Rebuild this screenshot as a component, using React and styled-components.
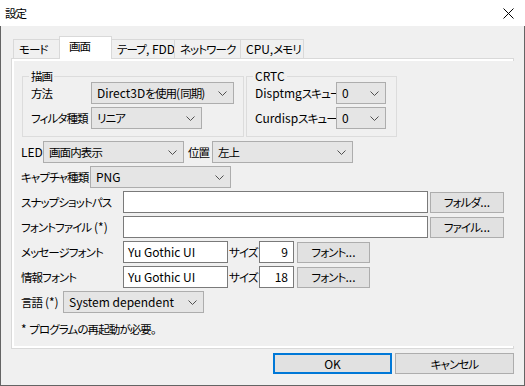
import React from "react";
import styled, { createGlobalStyle } from "styled-components";

const GlobalStyle = createGlobalStyle`
  html, body {
    margin: 0;
    padding: 0;
    background: #f0f0f0;
  }
  body {
    font-family: "Noto Sans CJK JP", sans-serif;
    font-size: 12px;
    line-height: 16px;
    font-feature-settings: "palt";
    color: #000;
  }
  * { box-sizing: border-box; }
`;

// Yu Gothic UI has narrow kana; squeeze the CJK runs to match
const Jp = styled.span`
  font-size: 11.5px;
  letter-spacing: -0.9px;
`;

const jp = (text) =>
  text
    .split(/([\u3000-\u30ff\u4e00-\u9fff\uff00-\uffef]+)/)
    .map((s, i) => (i % 2 ? <Jp key={i}>{s}</Jp> : s));

const Window = styled.div`
  width: 525px;
  height: 386px;
  display: flex;
  flex-direction: column;
  background: #f0f0f0;
`;

const TitleBar = styled.div`
  height: 26px;
  flex: none;
  background: #fff;
  display: flex;
  align-items: center;
  justify-content: space-between;
  padding: 0 11px 0 5px;
`;

const Body = styled.div`
  flex: 1;
  display: flex;
  flex-direction: column;
  border: 1px solid #646464;
  border-top: none;
  padding: 10px 10px 11px 10px;
`;

const TabStrip = styled.div`
  height: 22px;
  flex: none;
  display: flex;
  align-items: flex-end;
  padding-left: 2px;
`;

const Tab = styled.div`
  width: ${(p) => p.$w}px;
  height: ${(p) => (p.$active ? 23 : 19)}px;
  margin-left: -1px;
  margin-bottom: ${(p) => (p.$active ? -1 : 0)}px;
  padding: 0 0 ${(p) => (p.$active ? 4 : 1)}px ${(p) => (p.$active ? 9 : 5)}px;
  position: relative;
  z-index: ${(p) => (p.$active ? 1 : 0)};
  display: flex;
  align-items: center;
  white-space: nowrap;
  overflow: hidden;
  border: 1px solid #d9d9d9;
  border-bottom: none;
  background: ${(p) => (p.$active ? "#fff" : "#f0f0f0")};
  &:first-child { margin-left: 0; }
`;

const Panel = styled.div`
  flex: 1;
  display: flex;
  border: 1px solid #d9d9d9;
  background: #fff;
  padding: 2px;
`;

const Page = styled.div`
  flex: 1;
  background: #f0f0f0;
  display: flex;
  flex-direction: column;
  gap: 3px;
  padding: 9px 10px 0 7px;
`;

const GroupRow = styled.div`
  display: flex;
  gap: 2px;
  margin-left: 1px;
  margin-bottom: 1px;
`;

const Group = styled.fieldset`
  width: ${(p) => p.$w}px;
  margin: 0;
  min-width: 0;
  padding: 0 0 7px 8px;
  border: 1px solid #dcdcdc;
  display: flex;
  flex-direction: column;
  gap: 3px;
`;

const Legend = styled.legend`
  padding: 0 2px;
  margin-left: -2px;
  line-height: 12px;
`;

const Row = styled.div`
  display: flex;
  align-items: center;
  height: 22px;
`;

const Note = styled.div`
  margin-top: 5px;
  height: 16px;
`;

const LabelBox = styled.div`
  width: ${(p) => p.$w}px;
  flex: none;
  padding-left: ${(p) => p.$pl || 0}px;
  white-space: nowrap;
`;

const SelectBox = styled.div`
  width: ${(p) => p.$w}px;
  height: 22px;
  flex: none;
  display: flex;
  align-items: center;
  justify-content: space-between;
  padding: 0 6px 0 5px;
  background: #e5e5e5;
  border: 1px solid #adadad;
  white-space: nowrap;
`;

const TextField = styled.div`
  width: ${(p) => p.$w}px;
  height: 22px;
  flex: none;
  display: flex;
  align-items: center;
  justify-content: ${(p) => (p.$right ? "flex-end" : "flex-start")};
  padding: 0 ${(p) => (p.$right ? 5 : 4)}px;
  background: #fff;
  border: 1px solid #7a7a7a;
`;

const ButtonBox = styled.div`
  width: ${(p) => p.$w}px;
  height: 21px;
  margin-left: ${(p) => p.$ml || 0}px;
  flex: none;
  display: flex;
  align-items: center;
  justify-content: center;
  background: #e1e1e1;
  border: ${(p) => (p.$default ? "2px solid #0078d7" : "1px solid #adadad")};
`;

const ButtonBar = styled.div`
  flex: none;
  display: flex;
  justify-content: flex-end;
  gap: 3px;
  margin-top: 4px;
`;

const Chevron = () => (
  <svg width="9" height="5" viewBox="0 0 9 5">
    <path d="M0.5 0.5 L4.5 4.5 L8.5 0.5" fill="none" stroke="#505050" strokeWidth="1" />
  </svg>
);

const Select = ({ w, children }) => (
  <SelectBox $w={w}>
    <span>{jp(children)}</span>
    <Chevron />
  </SelectBox>
);

const Label = ({ w, pl, children }) => (
  <LabelBox $w={w} $pl={pl}>
    {jp(children)}
  </LabelBox>
);

const Button = ({ w, ml, isDefault, children }) => (
  <ButtonBox $w={w} $ml={ml} $default={isDefault}>
    {jp(children)}
  </ButtonBox>
);

const CloseIcon = () => (
  <svg width="11" height="11" viewBox="0 0 11 11">
    <path d="M0.5 0.5 L10.5 10.5 M10.5 0.5 L0.5 10.5" stroke="#000" strokeWidth="1" />
  </svg>
);

const tabs = [
  { label: "モード", w: 47 },
  { label: "画面", w: 53, active: true },
  { label: "テープ, FDD", w: 64 },
  { label: "ネットワーク", w: 67 },
  { label: "CPU, メモリ", w: 64 },
];

export default function App() {
  return (
    <>
      <GlobalStyle />
      <Window>
        <TitleBar>
          <span>{jp("設定")}</span>
          <CloseIcon />
        </TitleBar>
        <Body>
          <TabStrip>
            {tabs.map((t) => (
              <Tab key={t.label} $w={t.w} $active={t.active}>
                {jp(t.label)}
              </Tab>
            ))}
          </TabStrip>
          <Panel>
            <Page>
              <GroupRow>
                <Group $w={222}>
                  <Legend>{jp("描画")}</Legend>
                  <Row>
                    <Label w={60}>方法</Label>
                    <Select w={143}>Direct3Dを使用(同期)</Select>
                  </Row>
                  <Row>
                    <Label w={60}>フィルタ種類</Label>
                    <Select w={111}>リニア</Select>
                  </Row>
                </Group>
                <Group $w={151}>
                  <Legend>CRTC</Legend>
                  <Row>
                    <Label w={81}>Disptmgスキュー</Label>
                    <Select w={50}>0</Select>
                  </Row>
                  <Row>
                    <Label w={81}>Curdispスキュー</Label>
                    <Select w={50}>0</Select>
                  </Row>
                </Group>
              </GroupRow>
              <Row>
                <Label w={22}>LED</Label>
                <Select w={141}>画面内表示</Select>
                <Label w={28} pl={4}>位置</Label>
                <Select w={141}>左上</Select>
              </Row>
              <Row>
                <Label w={69}>キャプチャ種類</Label>
                <Select w={141}>PNG</Select>
              </Row>
              <Row>
                <Label w={102}>スナップショットパス</Label>
                <TextField $w={305} />
                <Button w={74} ml={2}>フォルダ...</Button>
              </Row>
              <Row>
                <Label w={102}>フォントファイル (*)</Label>
                <TextField $w={305} />
                <Button w={74} ml={2}>ファイル...</Button>
              </Row>
              <Row>
                <Label w={102}>メッセージフォント</Label>
                <TextField $w={105}>Yu Gothic UI</TextField>
                <Label w={31} pl={1}>サイズ</Label>
                <TextField $w={35} $right>9</TextField>
                <Button w={73} ml={3}>フォント...</Button>
              </Row>
              <Row>
                <Label w={102}>情報フォント</Label>
                <TextField $w={105}>Yu Gothic UI</TextField>
                <Label w={31} pl={1}>サイズ</Label>
                <TextField $w={35} $right>18</TextField>
                <Button w={73} ml={3}>フォント...</Button>
              </Row>
              <Row>
                <Label w={42}>言語 (*)</Label>
                <Select w={141}>System dependent</Select>
              </Row>
              <Note>{jp("* プログラムの再起動が必要。")}</Note>
            </Page>
          </Panel>
          <ButtonBar>
            <Button w={119} isDefault>OK</Button>
            <Button w={119}>キャンセル</Button>
          </ButtonBar>
        </Body>
      </Window>
    </>
  );
}
